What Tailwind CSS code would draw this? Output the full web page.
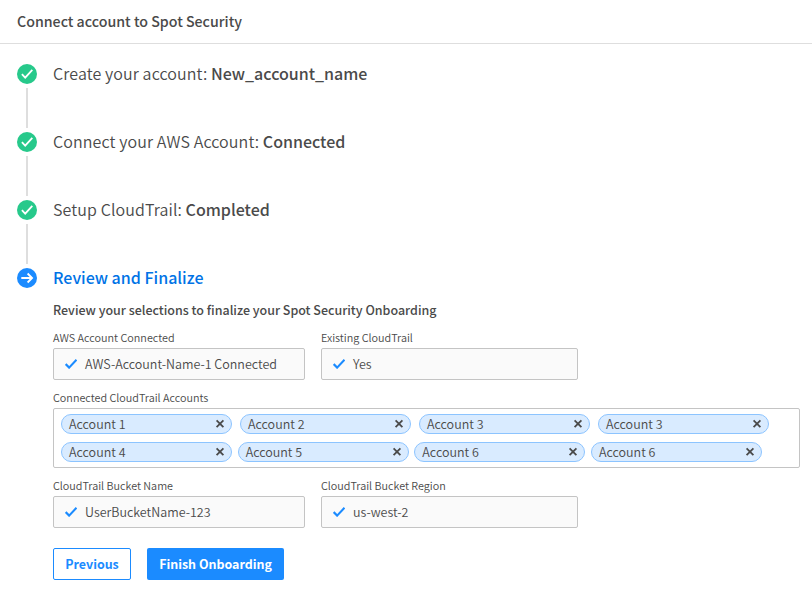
<!DOCTYPE html>
<html lang="en">
<head>
<meta charset="utf-8">
<title>Connect account to Spot Security</title>
<script src="https://cdn.jsdelivr.net/npm/@tailwindcss/browser@4"></script>
</head>
<body class="bg-white text-[#4a4a4a] font-['Noto_Sans_CJK_SC',sans-serif] font-[350] antialiased h-[593px] w-[812px] overflow-hidden">
<svg class="hidden">
  <symbol id="done" viewBox="0 0 20 20"><circle cx="10" cy="10" r="10" fill="#27c98b"/><path d="M4.9 10.2 8.2 13.6 15.3 5.9" fill="none" stroke="#fff" stroke-width="1.8"/></symbol>
  <symbol id="check" viewBox="0 0 12 10"><path d="M.7 5.1 4.1 8.6 11.5.8" fill="none" stroke="#1b8bff" stroke-width="2.1"/></symbol>
  <symbol id="x" viewBox="0 0 10 10"><path d="M1.6 1.4 8.4 8.2M8.4 1.4 1.6 8.2" fill="none" stroke="#4a4a4a" stroke-width="1.8"/></symbol>
</svg>
<header class="h-11 border-b border-[#dedede] flex items-center pl-[17px] text-[14.2px] font-medium whitespace-nowrap"><h1>Connect account to Spot Security</h1></header>
<main class="pl-[17px] pt-5">
  <section class="flex h-[68px] gap-4">
    <div class="w-5 flex flex-col items-center gap-1"><svg class="size-5"><use href="#done"/></svg><div class="w-0.5 h-10 bg-[#dedede]"></div></div>
    <h2 class="text-base leading-[18px] whitespace-nowrap font-[350] tracking-[0.11px]">Create your account: <span class="font-medium tracking-normal">New_account_name</span></h2>
  </section>
  <section class="flex h-[68px] gap-4">
    <div class="w-5 flex flex-col items-center gap-1"><svg class="size-5"><use href="#done"/></svg><div class="w-0.5 h-10 bg-[#dedede]"></div></div>
    <h2 class="text-base leading-[18px] whitespace-nowrap font-[350] tracking-[0.11px]">Connect your AWS Account: <span class="font-medium tracking-normal">Connected</span></h2>
  </section>
  <section class="flex h-[68px] gap-4">
    <div class="w-5 flex flex-col items-center gap-1"><svg class="size-5"><use href="#done"/></svg><div class="w-0.5 h-10 bg-[#dedede]"></div></div>
    <h2 class="text-base leading-[18px] whitespace-nowrap font-[350] tracking-[0.11px]">Setup CloudTrail: <span class="font-medium tracking-normal">Completed</span></h2>
  </section>
  <section class="flex gap-4">
    <svg class="size-5 shrink-0" viewBox="0 0 20 20"><circle cx="10" cy="10" r="10" fill="#1b8bff"/><path d="M4.3 10H15M10.6 5.5 15.1 10 10.6 14.5" fill="none" stroke="#fff" stroke-width="1.8"/></svg>
    <div class="w-[747px] whitespace-nowrap">
      <h2 class="h-5 text-base leading-[18px] font-medium text-[#0073e6]">Review and Finalize</h2>
      <p class="mt-3 h-5 text-[12.47px] leading-5 font-medium">Review your selections to finalize your Spot Security Onboarding</p>
      <div class="flex gap-4 mt-2.5">
        <div class="w-[252px]"><div class="h-4 text-[10.8px] leading-[14px] mb-0.5">AWS Account Connected</div>
          <div class="h-8 border border-[#c4c4c4] rounded-[2px] bg-[#fafafa] flex items-center gap-2 pl-[11px] text-[12.5px]"><svg class="w-3 h-2.5"><use href="#check"/></svg><span>AWS-Account-Name-1 Connected</span></div></div>
        <div class="w-[257px]"><div class="h-4 text-[10.8px] leading-[14px] mb-0.5">Existing CloudTrail</div>
          <div class="h-8 border border-[#c4c4c4] rounded-[2px] bg-[#fafafa] flex items-center gap-2 pl-[11px] text-[12.5px]"><svg class="w-3 h-2.5"><use href="#check"/></svg><span>Yes</span></div></div>
      </div>
      <div class="mt-2.5 h-4 text-[10.8px] leading-[14px] mb-0.5">Connected CloudTrail Accounts</div>
      <div class="h-[60px] border border-[#c4c4c4] rounded-[2px] pl-[7px] pt-[5px] flex flex-col gap-2 text-[12.5px]">
        <div class="flex gap-2">
          <div class="w-[171px] h-5 rounded-full border border-[#8cc4ff] bg-[#d9ebff] flex items-center justify-between pl-[7px] pr-1.5"><span>Account 1</span><svg class="size-2.5"><use href="#x"/></svg></div>
          <div class="w-[171px] h-5 rounded-full border border-[#8cc4ff] bg-[#d9ebff] flex items-center justify-between pl-[7px] pr-1.5"><span>Account 2</span><svg class="size-2.5"><use href="#x"/></svg></div>
          <div class="w-[171px] h-5 rounded-full border border-[#8cc4ff] bg-[#d9ebff] flex items-center justify-between pl-[7px] pr-1.5"><span>Account 3</span><svg class="size-2.5"><use href="#x"/></svg></div>
          <div class="w-[171px] h-5 rounded-full border border-[#8cc4ff] bg-[#d9ebff] flex items-center justify-between pl-[7px] pr-1.5"><span>Account 3</span><svg class="size-2.5"><use href="#x"/></svg></div>
        </div>
        <div class="flex gap-[5.67px]">
          <div class="w-[171px] h-5 rounded-full border border-[#8cc4ff] bg-[#d9ebff] flex items-center justify-between pl-[7px] pr-1.5"><span>Account 4</span><svg class="size-2.5"><use href="#x"/></svg></div>
          <div class="w-[171px] h-5 rounded-full border border-[#8cc4ff] bg-[#d9ebff] flex items-center justify-between pl-[7px] pr-1.5"><span>Account 5</span><svg class="size-2.5"><use href="#x"/></svg></div>
          <div class="w-[171px] h-5 rounded-full border border-[#8cc4ff] bg-[#d9ebff] flex items-center justify-between pl-[7px] pr-1.5"><span>Account 6</span><svg class="size-2.5"><use href="#x"/></svg></div>
          <div class="w-[171px] h-5 rounded-full border border-[#8cc4ff] bg-[#d9ebff] flex items-center justify-between pl-[7px] pr-1.5"><span>Account 6</span><svg class="size-2.5"><use href="#x"/></svg></div>
        </div>
      </div>
      <div class="flex gap-4 mt-2.5">
        <div class="w-[252px]"><div class="h-4 text-[10.8px] leading-[14px] mb-0.5">CloudTrail Bucket Name</div>
          <div class="h-8 border border-[#c4c4c4] rounded-[2px] bg-[#fafafa] flex items-center gap-2 pl-[11px] text-[12.5px]"><svg class="w-3 h-2.5"><use href="#check"/></svg><span>UserBucketName-123</span></div></div>
        <div class="w-[257px]"><div class="h-4 text-[10.8px] leading-[14px] mb-0.5">CloudTrail Bucket Region</div>
          <div class="h-8 border border-[#c4c4c4] rounded-[2px] bg-[#fafafa] flex items-center gap-2 pl-[11px] text-[12.5px]"><svg class="w-3 h-2.5"><use href="#check"/></svg><span>us-west-2</span></div></div>
      </div>
      <div class="flex gap-4 mt-5 text-[12.45px] font-bold">
        <button class="w-[78px] h-8 rounded-[2px] border border-[#1b8bff] text-[#1b8bff]">Previous</button>
        <button class="w-[137px] h-8 rounded-[2px] bg-[#1b8bff] text-white">Finish Onboarding</button>
      </div>
    </div>
  </section>
</main>
</body>
</html>
